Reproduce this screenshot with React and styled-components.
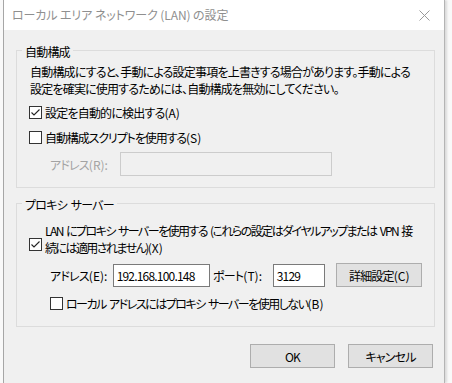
import React from "react";
import styled, { createGlobalStyle } from "styled-components";

const Global = createGlobalStyle`
  html, body { margin: 0; padding: 0; background: #f9f9f9; }
  body {
    font-family: "Noto Sans CJK JP", "Noto Sans", sans-serif;
    font-size: 12px;
    font-feature-settings: "palt";
    color: #000;
  }
  * { box-sizing: border-box; }
`;

const Window = styled.div`
  margin-left: 3px;
  width: 442px;
  height: 383px;
  border-left: 1px solid #a6a6a6;
  border-right: 1px solid #b4b4b4;
  box-shadow: 2px 0 2px rgba(0, 0, 0, 0.12);
  background: #f0f0f0;
  display: flex;
  flex-direction: column;
`;

const TitleBar = styled.div`
  height: 30px;
  background: #fff;
  display: flex;
  align-items: center;
  justify-content: space-between;
  padding: 0 10px 0 8px;
  flex-shrink: 0;
`;

const Title = styled.div`
  color: #8f8f8f;
  font-size: 12px;
  line-height: 16px;
  letter-spacing: -0.1px;
`;

const Close = styled.div`
  width: 30px;
  height: 30px;
  display: flex;
  align-items: center;
  justify-content: center;
  margin-right: -5px;
`;

const Client = styled.div`
  padding: 20px 9px 0 12px;
  display: flex;
  flex-direction: column;
  letter-spacing: -0.8px;
  word-spacing: 2px;
`;

const Group = styled.div`
  position: relative;
  border: 1px solid #dcdcdc;
  margin-top: ${(p) => p.$mt || 0}px;
  padding: ${(p) => p.$pt}px 12px ${(p) => p.$pb}px 13px;
  display: flex;
  flex-direction: column;
`;

const Legend = styled.div`
  position: absolute;
  top: -5px;
  left: 5px;
  padding: 0 3px;
  background: #f0f0f0;
  line-height: 12px;
  white-space: nowrap;
`;

const Desc = styled.div`
  line-height: 17px;
  white-space: nowrap;
`;

const CheckRow = styled.label`
  display: flex;
  align-items: ${(p) => (p.$multi ? "flex-start" : "center")};
  gap: 3px;
  line-height: 17px;
  margin-left: ${(p) => p.$indent}px;
  margin-top: ${(p) => p.$mt || 0}px;
  white-space: nowrap;
  letter-spacing: ${(p) => (p.$ls != null ? `${p.$ls}px` : "inherit")};
`;

const Key = styled.span`
  letter-spacing: 0;
`;

const Box = styled.span`
  width: 13px;
  height: 13px;
  border: 1px solid #333;
  background: #fff;
  flex-shrink: 0;
  display: flex;
  align-items: center;
  justify-content: center;
  margin-top: ${(p) => p.$mt || 0}px;
`;

const FieldRow = styled.div`
  display: flex;
  align-items: center;
  margin-left: ${(p) => p.$indent}px;
  margin-top: ${(p) => p.$mt || 0}px;
`;

const FieldLabel = styled.span`
  width: ${(p) => p.$w}px;
  padding-left: ${(p) => p.$pl || 0}px;
  color: ${(p) => (p.$disabled ? "#a3a3a3" : "#000")};
  white-space: nowrap;
`;

const Input = styled.div`
  width: ${(p) => p.$w}px;
  height: ${(p) => p.$h}px;
  border: 1px solid ${(p) => (p.$disabled ? "#cccccc" : "#7a7a7a")};
  background: ${(p) => (p.$disabled ? "#f0f0f0" : "#fff")};
  padding: 0 3px;
  display: flex;
  align-items: center;
  white-space: nowrap;
  overflow: hidden;
`;

const Button = styled.div`
  width: ${(p) => p.$w}px;
  height: 24px;
  border: 1px solid #adadad;
  background: #e1e1e1;
  display: flex;
  align-items: center;
  justify-content: center;
  margin-left: ${(p) => p.$ml || 0}px;
  white-space: nowrap;
`;

const Footer = styled.div`
  display: flex;
  justify-content: flex-end;
  gap: 13px;
  padding: 17px 2px 0 0;
`;

const Check = ({ checked, mt }) => (
  <Box $mt={mt}>
    {checked && (
      <svg width="11" height="11" viewBox="0 0 11 11">
        <polyline points="1.5,5.5 4,8 9.5,2.5" fill="none" stroke="#222" strokeWidth="1.1" />
      </svg>
    )}
  </Box>
);

export default function App() {
  return (
    <>
      <Global />
      <Window>
        <TitleBar>
          <Title>ローカル エリア ネットワーク (LAN) の設定</Title>
          <Close>
            <svg width="11" height="11" viewBox="0 0 11 11">
              <path d="M0.5 0.5 L10.5 10.5 M10.5 0.5 L0.5 10.5" stroke="#9a9a9a" strokeWidth="1" fill="none" />
            </svg>
          </Close>
        </TitleBar>
        <Client>
          <Group $pt={12} $pb={11}>
            <Legend>自動構成</Legend>
            <Desc>
              自動構成にすると、手動による設定事項を上書きする場合があります。手動による
              <br />
              設定を確実に使用するためには、自動構成を無効にしてください。
            </Desc>
            <CheckRow $indent={-1} $mt={7}>
              <Check checked />
              <span>
                設定を自動的に検出する<Key>(A)</Key>
              </span>
            </CheckRow>
            <CheckRow $indent={-1} $mt={8} $ls={-1.1}>
              <Check />
              <span>
                自動構成スクリプトを使用する<Key>(S)</Key>
              </span>
            </CheckRow>
            <FieldRow $indent={20} $mt={6}>
              <FieldLabel $w={70} $disabled>
                アドレス<Key>(R):</Key>
              </FieldLabel>
              <Input $w={212} $h={24} $disabled />
            </FieldRow>
          </Group>
          <Group $mt={15} $pt={18} $pb={14}>
            <Legend>プロキシ サーバー</Legend>
            <CheckRow $indent={-1} $multi $ls={-1.55}>
              <Check checked mt={16} />
              <span>
                LAN にプロキシ サーバーを使用する (これらの設定はダイヤルアップまたは VPN 接
                <br />
                続には適用されません)<Key>(X)</Key>
              </span>
            </CheckRow>
            <FieldRow $indent={20} $mt={7}>
              <FieldLabel $w={63}>
                アドレス<Key>(E):</Key>
              </FieldLabel>
              <Input $w={98} $h={23}>192.168.100.148</Input>
              <FieldLabel $w={63} $pl={3}>
                ポート<Key>(T):</Key>
              </FieldLabel>
              <Input $w={53} $h={23}>3129</Input>
              <Button $w={86} $ml={11}>
                詳細設定<Key>(C)</Key>
              </Button>
            </FieldRow>
            <CheckRow $indent={20} $mt={8} $ls={-1.5}>
              <Check />
              <span>
                ローカル アドレスにはプロキシ サーバーを使用しない<Key>(B)</Key>
              </span>
            </CheckRow>
          </Group>
          <Footer>
            <Button $w={85}>OK</Button>
            <Button $w={85}>キャンセル</Button>
          </Footer>
        </Client>
      </Window>
    </>
  );
}
